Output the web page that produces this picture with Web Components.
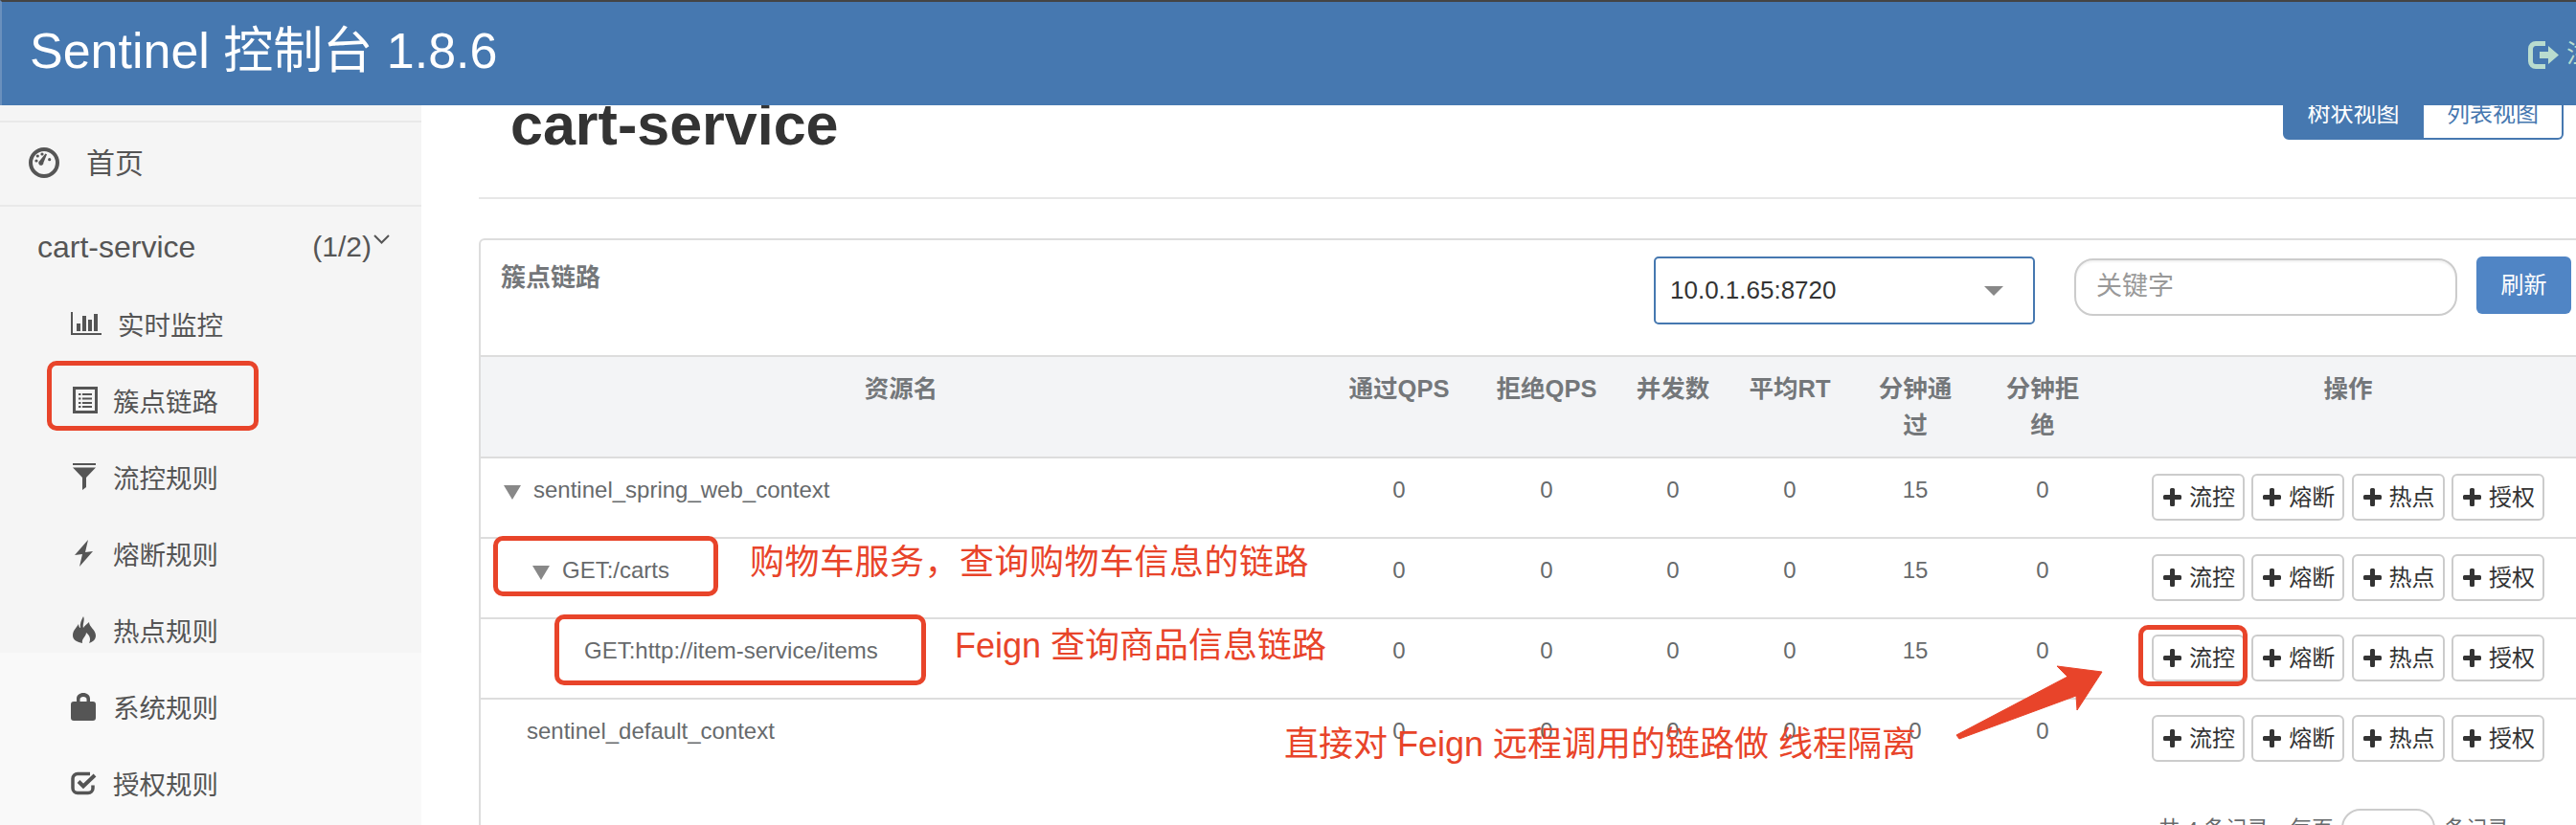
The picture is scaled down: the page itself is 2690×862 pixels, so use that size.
<!DOCTYPE html>
<html lang="zh">
<head>
<meta charset="utf-8">
<title>Sentinel 控制台</title>
<style>
  html, body { margin: 0; height: 862px; overflow: hidden; background: #fff; }
  body { font-family: "Liberation Sans", "Noto Sans CJK SC", sans-serif; color: #676a6c; }
</style>
</head>
<body>
<sentinel-app>
  <app-header slot="header" title-text="Sentinel 控制台 1.8.6" logout-text="注销"></app-header>

  <side-nav slot="nav">
    <home-item>首页</home-item>
    <app-group name="cart-service" count="(1/2)"></app-group>
    <nav-item icon="stats" wide>实时监控</nav-item>
    <nav-item icon="list">簇点链路</nav-item>
    <nav-item icon="filter">流控规则</nav-item>
    <nav-item icon="bolt">熔断规则</nav-item>
    <nav-item icon="fire">热点规则</nav-item>
    <nav-item icon="lock">系统规则</nav-item>
    <nav-item icon="check">授权规则</nav-item>
    <red-mark style="left:49px;top:267px;width:221px;height:73px"></red-mark>
  </side-nav>

  <page-title slot="main" name="cart-service"></page-title>

  <cluster-card slot="main">
    <cluster-toolbar heading="簇点链路" machine="10.0.1.65:8720" placeholder="关键字" action="刷新"></cluster-toolbar>
    <cluster-head></cluster-head>
    <cluster-row name="sentinel_spring_web_context" indent="24" open values="0,0,0,0,15,0"></cluster-row>
    <cluster-row name="GET:/carts" indent="54" open values="0,0,0,0,15,0"></cluster-row>
    <cluster-row name="GET:http://item-service/items" indent="108" values="0,0,0,0,15,0"></cluster-row>
    <cluster-row name="sentinel_default_context" indent="48" last values="0,0,0,0,0,0"></cluster-row>
    <page-footer></page-footer>

    <red-mark style="left:13px;top:309px;width:235px;height:63px"></red-mark>
    <red-mark style="left:77px;top:391px;width:388px;height:74px"></red-mark>
    <red-mark style="left:1731px;top:402px;width:114px;height:64px"></red-mark>
    <red-note style="left:281px;top:315px;letter-spacing:.5px">购物车服务，查询购物车信息的链路</red-note>
    <red-note style="left:495px;top:402px">Feign 查询商品信息链路</red-note>
    <red-note style="left:839px;top:505px">直接对 Feign 远程调用的链路做 线程隔离</red-note>
    <red-arrow style="left:1538px;top:443px"></red-arrow>
  </cluster-card>
</sentinel-app>

<script>
const FONT = '"Liberation Sans", "Noto Sans CJK SC", sans-serif';

// hand drawn icons, sized to what the sidebar shows
const ICONS = {
  stats: `<svg width="32" height="24" viewBox="0 0 32 24" fill="currentColor"><path d="M0 0h2v22h30v2H0z"/><path d="M6 12h4v8H6zM12 4h4v16h-4zM18 8h4v12h-4zM24 2h4v18h-4z"/></svg>`,
  list: `<svg width="26" height="28" viewBox="0 0 26 28" fill="currentColor" style="margin-left:2px"><path fill-rule="evenodd" d="M0 0h26v28H0zM3 3v22h20V3z"/><path d="M6 7h2.500v2H6zM10 7h10v2H10zM6 11.500h2.500v2H6zM10 11.500h10v2H10zM6 16h2.500v2H6zM10 16h10v2H10zM6 20h2.500v2H6zM10 20h10v2H10z"/></svg>`,
  filter: `<svg width="24" height="28" viewBox="0 0 24 28" fill="currentColor" style="margin-left:2px"><path d="M0 0h24v2H0zM0 4.500h24L14 15v10l-4 3V15z"/></svg>`,
  bolt: `<svg width="19" height="28" viewBox="0 0 19 28" fill="currentColor" style="margin-left:4px"><path d="M14 0 0 16l8-1-3 13 14-16-8 1z"/></svg>`,
  fire: `<svg width="24" height="28" viewBox="0 0 24 28" fill="currentColor" style="margin-left:2px"><path d="M11 0C13 4 10 8 11 12 12 10 15 8 17 6 17 11 24 14 24 20 24 25 20 27 17 28 19 24 18 20 14 17 14 21 9 23 10 28 5 27 0 25 0 20 0 15 3 13 6 8 6 10 7 12 8 12 7 8 9 4 11 0Z"/></svg>`,
  lock: `<svg width="26" height="29" viewBox="0 0 26 29" fill="currentColor"><path fill-rule="evenodd" d="M6 9V6c0-3.500 3-6 7-6s7 2.500 7 6v3h3c2 0 3 1 3 3v14c0 2-1 3-3 3H3c-2 0-3-1-3-3V12c0-2 1-3 3-3zM9.500 9h7V6.500c0-1.500-1.500-2.500-3.500-2.500S9.500 5 9.500 6.500z"/></svg>`,
  check: `<svg width="27" height="25" viewBox="0 0 27 25" fill="none" stroke="currentColor" stroke-width="3.500"><path d="M20 2.500H7a5 5 0 0 0-5 5v10a5 5 0 0 0 5 5h11a5 5 0 0 0 5-5v-3"/><path d="M8 10.500l5 5L25 4" stroke-width="4"/></svg>`
};

class SentinelApp extends HTMLElement {
  constructor() {
    super();
    this.attachShadow({ mode: 'open' }).innerHTML = `
      <style>
        :host { display: flex; flex-direction: column; width: 2690px; height: 862px; overflow: hidden; font-family: ${FONT}; }
        .body { display: flex; flex: 1; min-height: 0; }
        .main { flex: 1; min-width: 0; overflow: hidden; }
      </style>
      <slot name="header"></slot>
      <div class="body">
        <slot name="nav"></slot>
        <div class="main"><slot name="main"></slot></div>
      </div>`;
  }
}

class AppHeader extends HTMLElement {
  constructor() {
    super();
    this.attachShadow({ mode: 'open' }).innerHTML = `
      <style>
        :host { display: flex; align-items: center; box-sizing: border-box; height: 110px; flex: none; padding: 0 0 6px 29px;
          background: #4678b0; border-top: 2px solid #444; border-left: 2px solid #6a90bd; overflow: hidden; position: relative; z-index: 2; }
        .title { color: #fff; font-size: 52px; line-height: 60px; white-space: nowrap; }
        .logout { margin-left: auto; margin-right: -42px; display: flex; align-items: center; gap: 8px; color: #b9dccf; font-size: 26px; white-space: nowrap; padding-top: 9px; }
        .logout span { position: relative; top: -4px; }
        svg { display: block; }
      </style>
      <div class="title"></div>
      <div class="logout">
        <svg width="32" height="29" viewBox="0 0 32 29" fill="none"><path d="M18 2.500H8a5.500 5.500 0 0 0-5.500 5.500v13A5.500 5.500 0 0 0 8 26.500h10" stroke="currentColor" stroke-width="5"/><path d="M12 11h9V5l11 9.500L21 24v-6h-9z" fill="currentColor"/></svg>
        <span></span>
      </div>`;
  }
  connectedCallback() {
    this.shadowRoot.querySelector('.title').textContent = this.getAttribute('title-text');
    this.shadowRoot.querySelector('span').textContent = this.getAttribute('logout-text');
  }
}

class SideNav extends HTMLElement {
  constructor() {
    super();
    this.attachShadow({ mode: 'open' }).innerHTML = `
      <style>
        :host { display: block; position: relative; flex: none; width: 440px; box-sizing: border-box; padding-top: 16px; color: #555;
          background: linear-gradient(#f5f5f5 0, #f5f5f5 572px, #f9f9f9 572px); }
      </style>
      <slot></slot>`;
  }
}

class HomeItem extends HTMLElement {
  constructor() {
    super();
    this.attachShadow({ mode: 'open' }).innerHTML = `
      <style>
        :host { display: flex; align-items: center; box-sizing: border-box; height: 90px; padding-left: 30px; gap: 28px; font-size: 30px;
          border-top: 2px solid #e9e9e9; border-bottom: 2px solid #e9e9e9; }
        svg { display: block; position: relative; top: -1px; }
        span { position: relative; top: -3px; }
      </style>
      <svg width="32" height="32" viewBox="0 0 32 32" fill="currentColor">
        <path fill-rule="evenodd" d="M16 0a16 16 0 1 0 0 32 16 16 0 0 0 0-32zM16 4a12 12 0 1 1 0 24 12 12 0 0 1 0-24z"/>
        <circle cx="14" cy="7" r="1.600"/><circle cx="9.300" cy="9" r="1.600"/><circle cx="21.700" cy="12.700" r="1.600"/><circle cx="8" cy="14" r="1.600"/>
        <path d="M11.200 14.200 17.500 6.500l1.500.8-3.600 8.600a2.600 2.600 0 1 1-4.200-1.700z"/>
      </svg>
      <span><slot></slot></span>`;
  }
}

class AppGroup extends HTMLElement {
  constructor() {
    super();
    this.attachShadow({ mode: 'open' }).innerHTML = `
      <style>
        :host { display: flex; align-items: center; height: 84px; padding: 0 33px 0 39px; box-sizing: border-box; }
        .name { flex: 1; font-size: 32px; }
        .count { font-size: 30px; }
        svg { display: block; margin: -16px 0 0 2px; }
      </style>
      <span class="name"></span><span class="count"></span>
      <svg width="17" height="10" viewBox="0 0 17 10" fill="none" stroke="currentColor" stroke-width="2"><path d="M1 1l7.500 7.500L16 1"/></svg>`;
  }
  connectedCallback() {
    this.shadowRoot.querySelector('.name').textContent = this.getAttribute('name');
    this.shadowRoot.querySelector('.count').textContent = this.getAttribute('count');
  }
}

class NavItem extends HTMLElement {
  constructor() {
    super();
    this.attachShadow({ mode: 'open' }).innerHTML = `
      <style>
        :host { display: flex; align-items: center; height: 80px; padding-left: 74px; font-size: 27.500px; }
        .icon { width: 44px; flex: none; }
        :host([wide]) .icon { width: 49px; }
        svg { display: block; position: relative; top: -2px; }
        span { position: relative; top: -2px; }
      </style>
      <div class="icon"></div><span><slot></slot></span>`;
  }
  connectedCallback() {
    this.shadowRoot.querySelector('.icon').innerHTML = ICONS[this.getAttribute('icon')];
  }
}

class PageTitle extends HTMLElement {
  constructor() {
    super();
    this.attachShadow({ mode: 'open' }).innerHTML = `
      <style>
        :host { display: flex; align-items: flex-start; justify-content: space-between; box-sizing: border-box; height: 98px; margin-left: 60px;
          padding: 0 13px 0 33px; border-bottom: 2px solid #e7e7e7; }
        h1 { margin: -10px 0 0; font-size: 61px; line-height: 60px; font-weight: bold; color: #333; }
        .tabs { display: flex; margin-top: -18px; font-size: 24px; line-height: 50px; }
        .tabs div { box-sizing: border-box; height: 54px; border: 2px solid #4678b0; text-align: center; }
        .on { width: 147px; background: #4678b0; color: #fff; border-radius: 0 0 0 6px; }
        .off { width: 146px; background: #fff; color: #4678b0; border-left: 0 !important; border-radius: 0 0 6px 0; }
      </style>
      <h1></h1>
      <div class="tabs"><div class="on">树状视图</div><div class="off">列表视图</div></div>`;
  }
  connectedCallback() {
    this.shadowRoot.querySelector('h1').textContent = this.getAttribute('name');
  }
}

class ClusterCard extends HTMLElement {
  constructor() {
    super();
    this.attachShadow({ mode: 'open' }).innerHTML = `
      <style>
        :host { display: block; position: relative; box-sizing: border-box; width: 2208px; margin: 41px 0 0 60px; background: #fff;
          border: 2px solid #ddd; border-bottom: 0; border-radius: 6px 6px 0 0;
          --cols: 878px 162px 146px 118px 126px 136px 130px 508px; }
      </style>
      <slot></slot>`;
  }
}

class ClusterToolbar extends HTMLElement {
  constructor() {
    super();
    this.attachShadow({ mode: 'open' }).innerHTML = `
      <style>
        :host { display: flex; align-items: flex-start; box-sizing: border-box; height: 122px; padding: 17px 21px 0 21px; border-bottom: 2px solid #ddd; }
        h3 { flex: 1; margin: 0; font-size: 26px; line-height: 44px; font-weight: bold; color: #74777a; }
        .select { position: relative; box-sizing: border-box; width: 398px; height: 71px; border: 2px solid #4678b0; border-radius: 5px;
          padding-left: 15px; font-size: 26px; line-height: 67px; color: #333; }
        .select::after { content: ""; position: absolute; right: 31px; top: 29px; border: 10px solid transparent; border-top-color: #888; border-bottom: 0; }
        .search { box-sizing: border-box; width: 400px; height: 60px; margin: 2px 0 0 41px; padding-left: 21px; border: 2px solid #ccc; border-radius: 20px;
          box-shadow: inset 0 2px 2px rgba(0,0,0,.05); font-size: 27px; line-height: 54px; color: #999; }
        .refresh { box-sizing: border-box; width: 99px; height: 60px; margin-left: 20px; background: #5085c5; border-radius: 6px; color: #fff;
          font-size: 24px; line-height: 60px; text-align: center; }
      </style>
      <h3></h3><div class="select"></div><div class="search"></div><div class="refresh"></div>`;
  }
  connectedCallback() {
    const $ = s => this.shadowRoot.querySelector(s);
    $('h3').textContent = this.getAttribute('heading');
    $('.select').textContent = this.getAttribute('machine');
    $('.search').textContent = this.getAttribute('placeholder');
    $('.refresh').textContent = this.getAttribute('action');
  }
}

class ClusterHead extends HTMLElement {
  constructor() {
    super();
    this.attachShadow({ mode: 'open' }).innerHTML = `
      <style>
        :host { display: grid; grid-template-columns: var(--cols); box-sizing: border-box; height: 106px; padding-top: 14px; background: #f3f4f6;
          border-bottom: 2px solid #ddd; font-size: 25.500px; line-height: 38px; font-weight: bold; color: #74777a; text-align: center; }
        .narrow { padding: 0 25px; }
      </style>
      <div>资源名</div><div>通过QPS</div><div>拒绝QPS</div><div>并发数</div><div>平均RT</div>
      <div class="narrow">分钟通过</div><div class="narrow">分钟拒绝</div><div>操作</div>`;
  }
}

class ActionBtn extends HTMLElement {
  constructor() {
    super();
    this.attachShadow({ mode: 'open' }).innerHTML = `
      <style>
        :host { display: flex; align-items: center; box-sizing: border-box; width: 97px; height: 49px; padding-left: 10px; gap: 8px;
          border: 2px solid #ccc; border-radius: 6px; background: #fff; color: #333; font-size: 24px; line-height: 1; }
        svg { display: block; flex: none; }
      </style>
      <svg width="19" height="19" viewBox="0 0 19 19" fill="currentColor"><path d="M7 1.500a1.500 1.500 0 0 1 1.500-1.500h2A1.500 1.500 0 0 1 12 1.500V7h5.500A1.500 1.500 0 0 1 19 8.500v2a1.500 1.500 0 0 1-1.500 1.500H12v5.500a1.500 1.500 0 0 1-1.500 1.500h-2A1.500 1.500 0 0 1 7 17.500V12H1.500A1.500 1.500 0 0 1 0 10.500v-2A1.500 1.500 0 0 1 1.500 7H7z"/></svg>
      <slot></slot>`;
  }
}

class ClusterRow extends HTMLElement {
  constructor() {
    super();
    this.attachShadow({ mode: 'open' }).innerHTML = `
      <style>
        :host { display: grid; grid-template-columns: var(--cols); box-sizing: border-box; height: 84px; border-bottom: 2px solid #ddd;
          font-size: 24px; line-height: 34px; color: #676a6c; }
        :host([last]) { border-bottom: 0; }
        .cell { padding-top: 16px; text-align: center; }
        .name { display: flex; text-align: left; white-space: nowrap; }
        .tri { width: 0; height: 0; margin: 12px 13px 0 0; border: 9px solid transparent; border-top: 15px solid #888; border-bottom: 0; }
        .ops { display: flex; gap: 7.300px; padding: 16px 0 0 49px; }
      </style>
      <div class="cell name"></div><div class="cell"></div><div class="cell"></div><div class="cell"></div>
      <div class="cell"></div><div class="cell"></div><div class="cell"></div>
      <div class="ops"><action-btn>流控</action-btn><action-btn>熔断</action-btn><action-btn>热点</action-btn><action-btn>授权</action-btn></div>`;
  }
  connectedCallback() {
    const cells = this.shadowRoot.querySelectorAll('.cell');
    const name = cells[0];
    name.style.paddingLeft = this.getAttribute('indent') + 'px';
    name.innerHTML = this.hasAttribute('open') ? '<i class="tri"></i>' : '';
    name.append(this.getAttribute('name'));
    this.getAttribute('values').split(',').forEach((v, i) => { cells[i + 1].textContent = v; });
  }
}

class PageFooter extends HTMLElement {
  constructor() {
    super();
    this.attachShadow({ mode: 'open' }).innerHTML = `
      <style>
        :host { display: flex; justify-content: flex-end; align-items: flex-start; gap: 9px; height: 80px; padding: 30px 86px 0 0; font-size: 22.500px; line-height: 44px; color: #676a6c; }
        .size { box-sizing: border-box; width: 98px; height: 60px; border: 2px solid #ccc; border-radius: 20px; text-align: center; color: #333; font-size: 26px; line-height: 54px; }
      </style>
      <span>共 4 条记录，每页</span><div class="size">10</div><span>条记录</span>`;
  }
}

class RedMark extends HTMLElement {
  constructor() {
    super();
    this.attachShadow({ mode: 'open' }).innerHTML = `
      <style>
        :host { display: block; position: absolute; box-sizing: border-box; border: 5px solid #e8442a; border-radius: 10px; pointer-events: none; }
      </style>`;
  }
}

class RedNote extends HTMLElement {
  constructor() {
    super();
    this.attachShadow({ mode: 'open' }).innerHTML = `
      <style>
        :host { display: block; position: absolute; font-size: 36px; line-height: 44px; color: #e8442a; white-space: nowrap; }
      </style>
      <slot></slot>`;
  }
}

class RedArrow extends HTMLElement {
  constructor() {
    super();
    this.attachShadow({ mode: 'open' }).innerHTML = `
      <style>
        :host { display: block; position: absolute; }
        svg { display: block; }
      </style>
      <svg width="158" height="84" viewBox="0 0 158 84"><path d="M155 8 108 2 119 13 3 74 6 78 128 33 129 48Z" fill="#e8442a" stroke="#e8442a" stroke-width="1" stroke-linejoin="round"/></svg>`;
  }
}

customElements.define('sentinel-app', SentinelApp);
customElements.define('app-header', AppHeader);
customElements.define('side-nav', SideNav);
customElements.define('home-item', HomeItem);
customElements.define('app-group', AppGroup);
customElements.define('nav-item', NavItem);
customElements.define('page-title', PageTitle);
customElements.define('cluster-card', ClusterCard);
customElements.define('cluster-toolbar', ClusterToolbar);
customElements.define('cluster-head', ClusterHead);
customElements.define('action-btn', ActionBtn);
customElements.define('cluster-row', ClusterRow);
customElements.define('page-footer', PageFooter);
customElements.define('red-mark', RedMark);
customElements.define('red-note', RedNote);
customElements.define('red-arrow', RedArrow);
</script>
</body>
</html>
